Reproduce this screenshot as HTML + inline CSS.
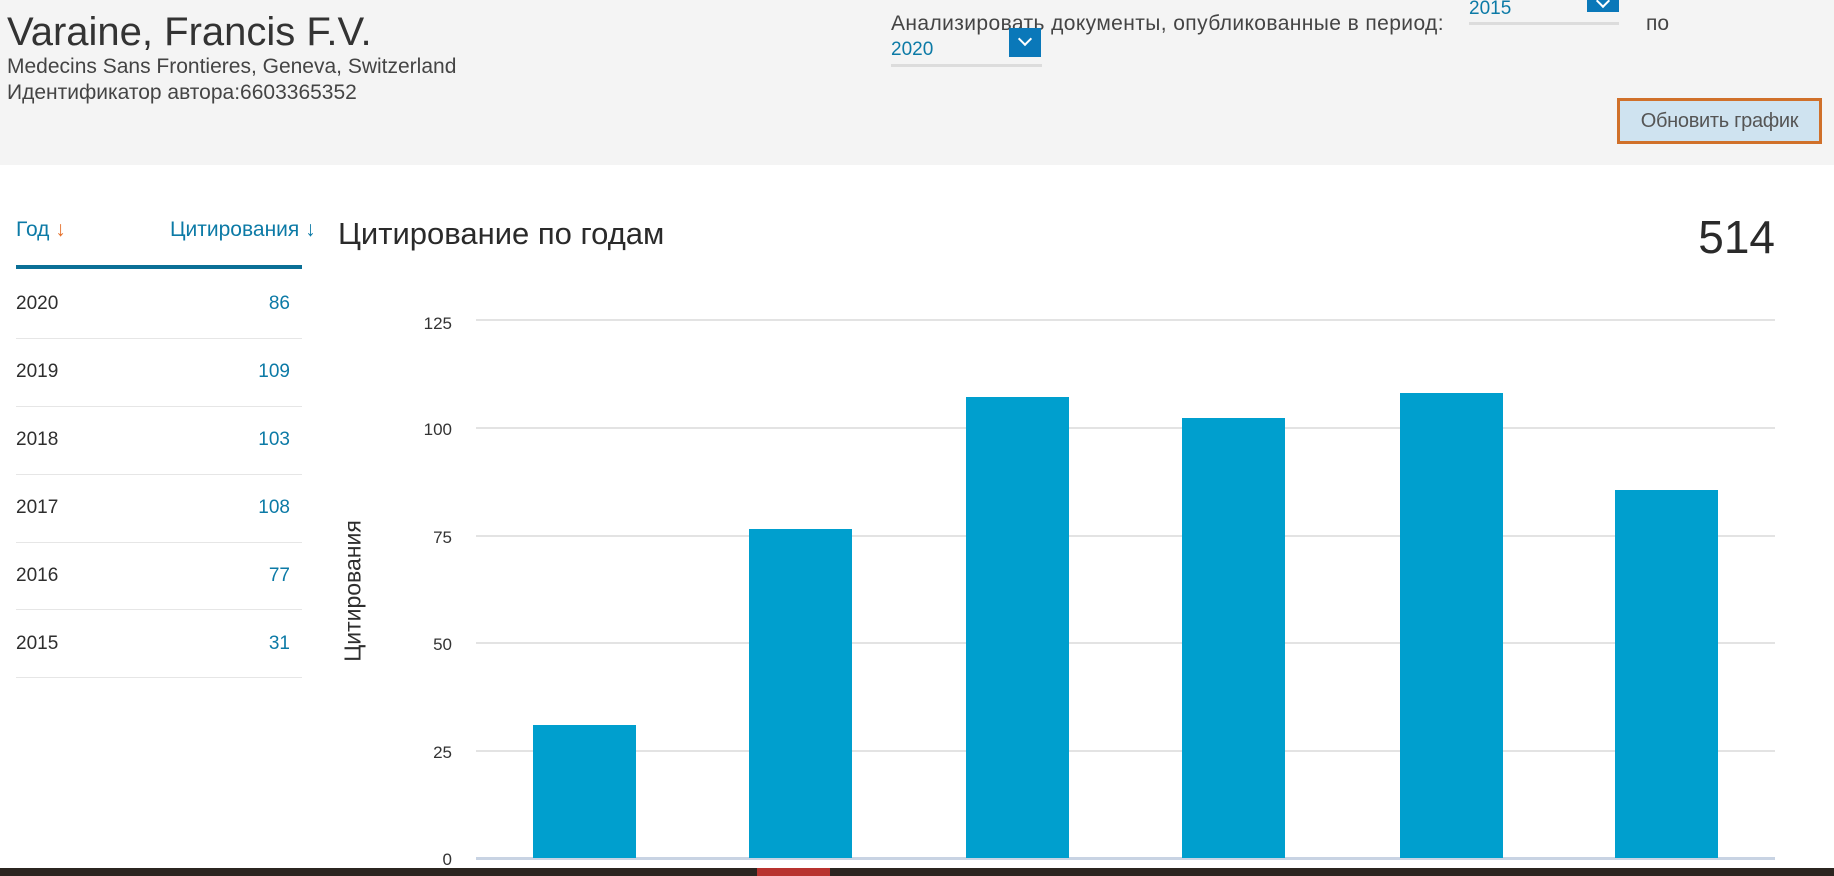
<!DOCTYPE html>
<html><head><meta charset="utf-8"><style>
*{margin:0;padding:0;box-sizing:border-box}
body{width:1834px;height:876px;overflow:hidden;background:#fff;font-family:"Liberation Sans",sans-serif;position:relative;color:#2e2e2e}
.a{position:absolute;white-space:nowrap}
.hdr{position:absolute;left:0;top:0;width:1834px;height:165px;background:#f4f4f4}
.blue{color:#0c7aa6}
.dd{position:absolute;background:#0a78b9;width:32px}
.dd::after{content:"";position:absolute;left:11px;top:6px;width:8px;height:8px;border-right:2px solid #fff;border-bottom:2px solid #fff;transform:rotate(45deg)}
.ul{position:absolute;height:3px;background:#dcdcdc}
.row{position:absolute;left:16px;width:286px;border-top:1px solid #e6e6e6}
.grid{position:absolute;left:476px;width:1299px;height:2px;background:#e3e3e3}
.yl{position:absolute;width:60px;text-align:right;left:392px;font-size:17px;color:#333}
.bar{position:absolute;width:103px;background:#009fce}
</style></head><body>
<div class="hdr"></div>
<div class="a" style="left:7px;top:10px;font-size:40px;color:#333">Varaine, Francis F.V.</div>
<div class="a" style="left:7px;top:55px;font-size:21px;color:#444">Medecins Sans Frontieres, Geneva, Switzerland</div>
<div class="a" style="left:7px;top:81px;font-size:21px;color:#444">Идентификатор автора:6603365352</div>

<div class="a" style="left:891px;top:12px;font-size:21px;letter-spacing:0.4px;color:#444">Анализировать документы, опубликованные в период:</div>
<div class="a blue" style="left:1469px;top:-2px;font-size:19px">2015</div>
<div class="dd" style="left:1587px;top:-10px;height:22px"></div>
<div class="ul" style="left:1469px;top:22px;width:150px"></div>
<div class="a" style="left:1646px;top:12px;font-size:21px;color:#444">по</div>
<div class="a blue" style="left:891px;top:39px;font-size:19px">2020</div>
<div class="dd" style="left:1009px;top:28px;height:29px"></div>
<div class="ul" style="left:891px;top:64px;width:151px"></div>
<div class="a" style="left:1617px;top:98px;width:205px;height:46px;border:3px solid #d0702a;background:#cfe3f0;font-size:20px;color:#555;text-align:center;line-height:40px;letter-spacing:-0.3px">Обновить график</div>

<div class="a blue" style="left:16px;top:218px;font-size:21px">Год <span style="color:#e5702a">↓</span></div>
<div class="a blue" style="left:170px;top:218px;font-size:21px">Цитирования ↓</div>
<div class="a" style="left:16px;top:265px;width:286px;height:4px;background:#0a6f96"></div>
<div class="row" style="top:338px"></div><div class="row" style="top:406px"></div><div class="row" style="top:474px"></div><div class="row" style="top:542px"></div><div class="row" style="top:609px"></div><div class="row" style="top:677px"></div>
<div class="a" style="left:16px;top:293px;font-size:19px">2020</div><div class="a blue" style="left:200px;width:90px;text-align:right;top:293px;font-size:19px">86</div>
<div class="a" style="left:16px;top:361px;font-size:19px">2019</div><div class="a blue" style="left:200px;width:90px;text-align:right;top:361px;font-size:19px">109</div>
<div class="a" style="left:16px;top:429px;font-size:19px">2018</div><div class="a blue" style="left:200px;width:90px;text-align:right;top:429px;font-size:19px">103</div>
<div class="a" style="left:16px;top:497px;font-size:19px">2017</div><div class="a blue" style="left:200px;width:90px;text-align:right;top:497px;font-size:19px">108</div>
<div class="a" style="left:16px;top:565px;font-size:19px">2016</div><div class="a blue" style="left:200px;width:90px;text-align:right;top:565px;font-size:19px">77</div>
<div class="a" style="left:16px;top:633px;font-size:19px">2015</div><div class="a blue" style="left:200px;width:90px;text-align:right;top:633px;font-size:19px">31</div>

<div class="a" style="left:338px;top:216px;font-size:31px;color:#2a2a2a">Цитирование по годам</div>
<div class="a" style="left:1650px;width:125px;text-align:right;top:210px;font-size:46px;color:#2a2a2a">514</div>
<div class="a" style="left:353px;top:591px;font-size:23px;transform:translate(-50%,-50%) rotate(-90deg)">Цитирования</div>

<div class="grid" style="top:319px"></div><div class="grid" style="top:427px"></div><div class="grid" style="top:535px"></div><div class="grid" style="top:642px"></div><div class="grid" style="top:750px"></div><div class="grid" style="top:857px;background:#c8d3e3;height:3px"></div>
<div class="yl" style="top:314px">125</div><div class="yl" style="top:420px">100</div><div class="yl" style="top:528px">75</div><div class="yl" style="top:635px">50</div><div class="yl" style="top:743px">25</div><div class="yl" style="top:850px">0</div>

<div class="bar" style="left:533px;top:725px;height:133px"></div>
<div class="bar" style="left:749px;top:529px;height:329px"></div>
<div class="bar" style="left:966px;top:397px;height:461px"></div>
<div class="bar" style="left:1182px;top:418px;height:440px"></div>
<div class="bar" style="left:1400px;top:393px;height:465px"></div>
<div class="bar" style="left:1615px;top:490px;height:368px"></div>

<div class="a" style="left:0;top:868px;width:1834px;height:8px;background:#2b2520"></div>
<div class="a" style="left:757px;top:868px;width:73px;height:8px;background:#b8332f"></div>
</body></html>
